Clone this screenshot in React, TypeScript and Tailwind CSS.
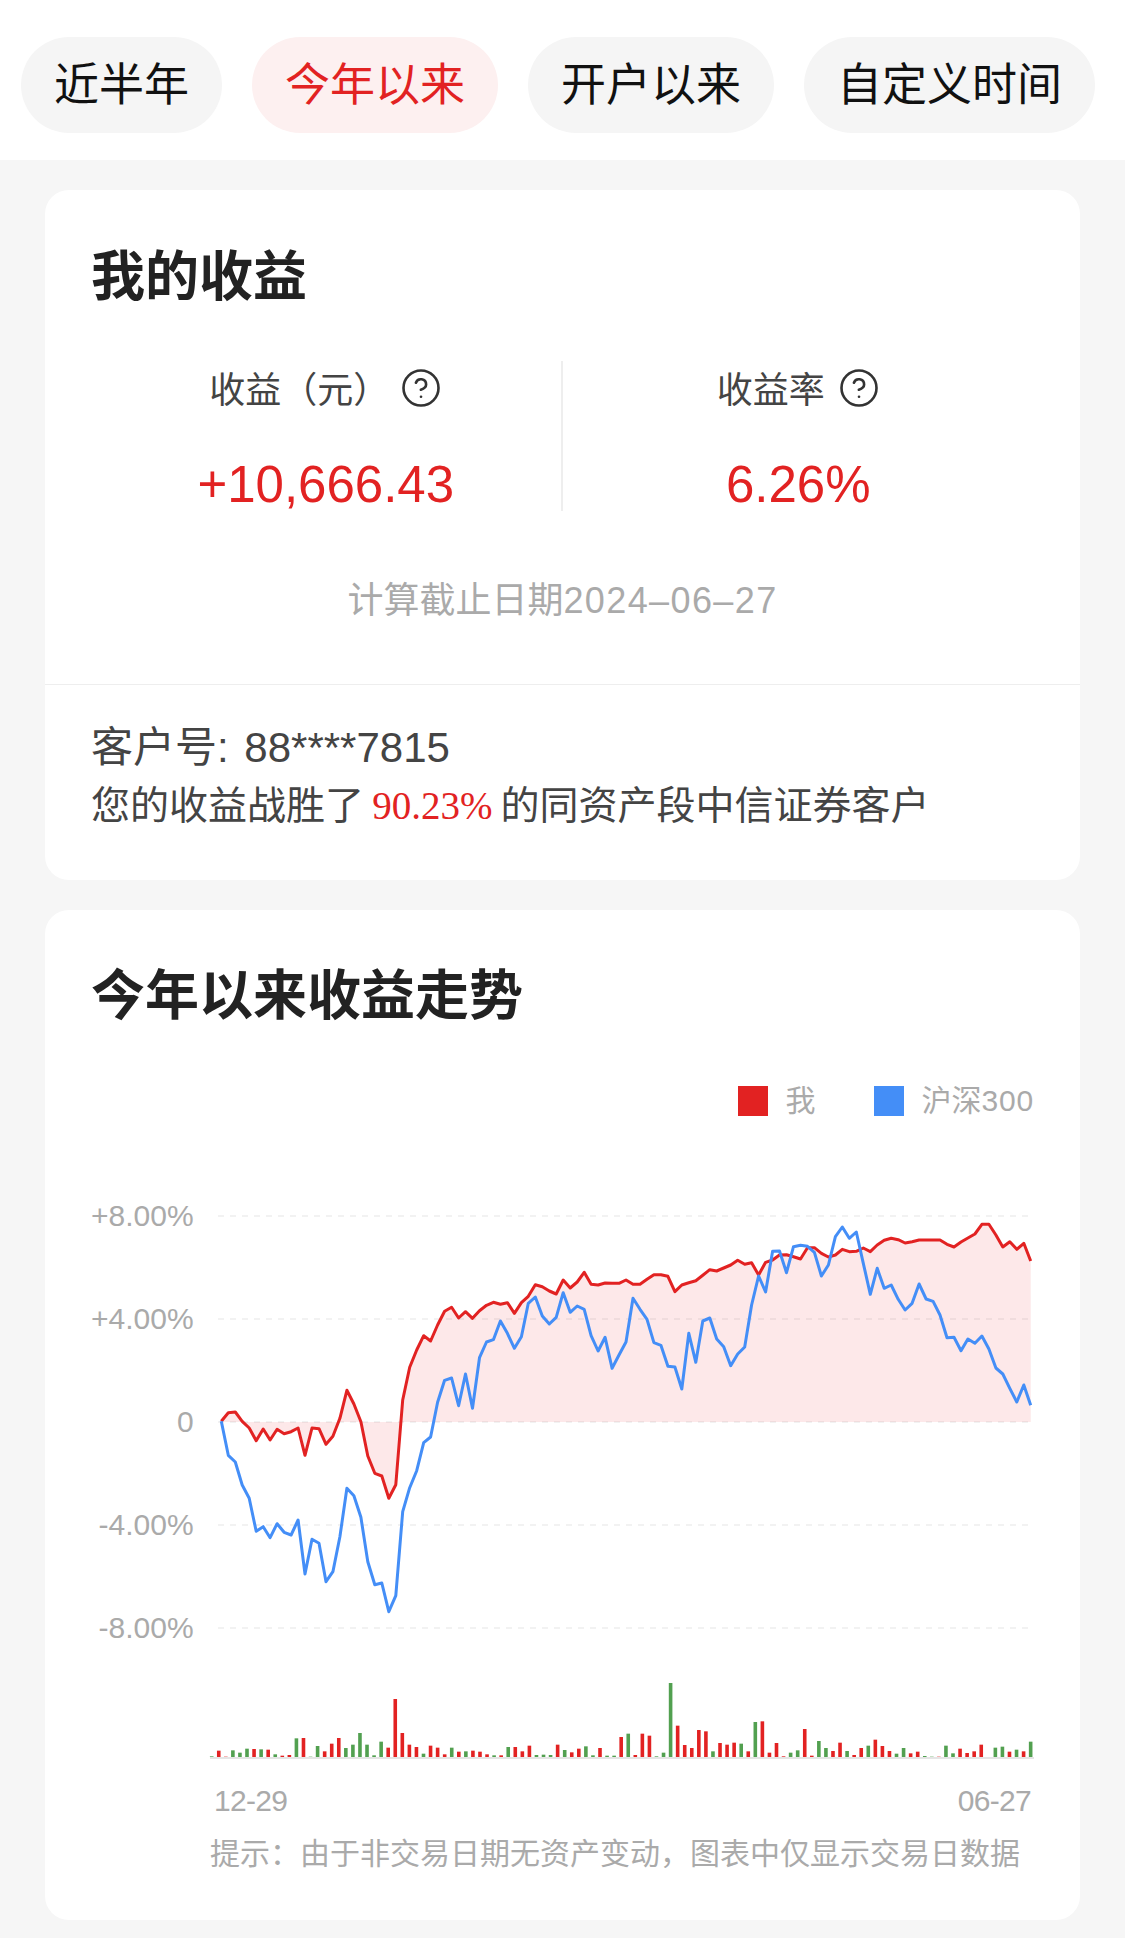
import { CircleHelp } from 'lucide-react'

// traced from the reference: y values are offsets*3 from the top of the chart
const red = [
  694, 668, 666, 694, 714, 752, 717, 750, 718, 731, 725, 714, 796, 714, 716, 763, 739, 685, 601, 642,
  695, 798, 850, 858, 925, 884, 630, 532, 480, 437, 453, 405, 364, 352, 384, 365, 385, 362, 346, 337,
  343, 338, 370, 338, 319, 284, 290, 303, 312, 270, 294, 276, 247, 283, 285, 279, 280, 280, 270,
  283, 283, 268, 254, 254, 259, 305, 285, 278, 272, 256, 239, 243, 234, 225, 211, 223, 218, 255, 217,
  210, 195, 194, 200, 207, 173, 173, 190, 201, 195, 178, 185, 184, 174, 185, 165, 151, 145, 149, 159,
  155, 150, 150, 150, 150, 163, 171, 156, 144, 132, 103, 103, 135, 171, 155, 178, 160, 213,
]

const blue = [
  694, 796, 816, 885, 925, 1024, 1010, 1043, 1001, 1027, 1035, 990, 1152, 1048, 1060, 1175, 1145, 1040, 895, 917,
  982, 1115, 1184, 1179, 1265, 1217, 965, 893, 842, 758, 741, 637, 571, 564, 647, 552, 655, 503, 456, 449,
  393, 430, 475, 440, 340, 321, 378, 402, 382, 308, 367, 348, 358, 437, 483, 442, 535, 495, 456,
  325, 358, 388, 458, 466, 529, 531, 597, 430, 517, 393, 384, 447, 470, 527, 492, 471, 345, 258, 306,
  184, 183, 248, 170, 166, 169, 187, 258, 225, 140, 111, 145, 126, 220, 313, 235, 295, 285, 328, 360,
  340, 282, 327, 334, 375, 443, 442, 482, 447, 460, 438, 477, 534, 552, 595, 636, 585, 646,
]

// [height*3, 1 = red / 0 = green]
const bars: [number, number][] = [
  [2, 0], [19, 1], [1, 1], [20, 0], [13, 0], [25, 0], [24, 1], [23, 0], [22, 1], [8, 0], [4, 1], [6, 1], [56, 0], [57, 1],
  [1, 0], [33, 0], [17, 1], [40, 1], [57, 1], [27, 0], [37, 0], [72, 0], [37, 0], [5, 0], [46, 0], [28, 1], [174, 1],
  [72, 1], [37, 1], [30, 1], [10, 0], [34, 1], [28, 1], [8, 1], [28, 0], [16, 1], [17, 0], [19, 1], [16, 1], [8, 1],
  [5, 0], [5, 1], [30, 0], [30, 1], [17, 1], [34, 1], [6, 0], [7, 0], [6, 0], [37, 1], [21, 0], [14, 1], [25, 1], [32, 0],
  [5, 0], [27, 1], [4, 0], [4, 0], [60, 1], [70, 0], [6, 1], [70, 1], [64, 1], [2, 0], [13, 0], [222, 0], [94, 1], [36, 1],
  [27, 1], [81, 1], [77, 1], [17, 0], [42, 1], [37, 1], [43, 1], [40, 0], [17, 1], [105, 0], [107, 1], [13, 1], [42, 1],
  [2, 1], [13, 0], [20, 0], [84, 1], [4, 1], [48, 0], [27, 0], [18, 1], [43, 1], [18, 0], [6, 1], [27, 1], [34, 0], [52, 1],
  [33, 1], [18, 1], [10, 0], [27, 0], [11, 1], [16, 1], [3, 0], [1, 0], [1, 1], [34, 0], [11, 0], [25, 1], [12, 1], [17, 1],
  [37, 1], [0, 1], [28, 0], [31, 0], [16, 1], [22, 0], [17, 1], [46, 0],
]

const px = (i: number) => 222.3 + i * 6.978
const py = (v: number) => 1190 + v / 3
const line = (data: number[]) => data.map((v, i) => `${px(i).toFixed(1)},${py(v).toFixed(1)}`).join(' ')

const Chart = () => (
  <svg width={830} height={580} viewBox="210 1190 830 580" className="block shrink-0">
    <polygon points={`222.3,1422 ${line(red)} ${px(116)},1422`} fill="#fde8e9" />
    {[1216, 1319, 1422, 1525, 1628].map((y) => (
      <line key={y} x1={219} x2={1030} y1={y} y2={y} stroke="#000000" strokeOpacity={0.05} strokeWidth={2} strokeDasharray="6 6" />
    ))}
    <polyline points={line(red)} fill="none" stroke="#e22222" strokeWidth={3} strokeLinejoin="round" />
    <polyline points={line(blue)} fill="none" stroke="#448ef7" strokeWidth={3} strokeLinejoin="round" />
    <rect x={211} y={1757} width={824} height={2} fill="#e5e5e5" />
    {bars.map(([h, up], i) => (
      <rect
        key={i}
        x={212.7 + i * 7.06 - 1.8}
        y={1757 - h / 3}
        width={3.6}
        height={h / 3}
        fill={up ? '#e22222' : '#52a050'}
      />
    ))}
  </svg>
)

const Tab = ({ label, active }: { label: string; active?: boolean }) => (
  <div
    className={`h-[96px] rounded-[48px] px-[33px] flex items-center text-[45px] leading-none ${
      active ? 'bg-[#fdf0f0] text-[#e22222]' : 'bg-[#f5f5f5] text-[#111111]'
    }`}
  >
    {label}
  </div>
)

const App = () => {
  return (
    <div className="min-h-[1938px] w-[1125px] bg-[#f6f6f6] pb-[18px] [font-family:'Liberation_Sans','Noto_Sans_CJK_SC',sans-serif]">
      <div className="h-[160px] bg-white pt-[37px] pl-[21px] flex items-start gap-[30px]">
        <Tab label="近半年" />
        <Tab label="今年以来" active />
        <Tab label="开户以来" />
        <Tab label="自定义时间" />
      </div>

      <div className="mx-[45px] mt-[30px] bg-white rounded-[24px]">
        <div className="px-[46px] pt-[60px]">
          <h3 className="text-[54px] leading-[54px] font-bold text-[#222222]">我的收益</h3>
          <div className="grid grid-cols-2 mt-[57px] h-[150px]">
            <div className="flex flex-col items-center pt-[8px] border-r-2 border-[#eeeeee]">
              <div className="flex items-center gap-[11px] h-[44px] text-[36px] text-[#444444]">
                收益（元）
                <CircleHelp size={42} strokeWidth={1.5} color="#333333" className="-mt-[6px]" />
              </div>
              <div className="mt-[47px] text-[51px] leading-[50px] text-[#e22222]">+10,666.43</div>
            </div>
            <div className="flex flex-col items-center pt-[8px]">
              <div className="flex items-center gap-[13px] h-[44px] text-[36px] text-[#444444]">
                收益率
                <CircleHelp size={42} strokeWidth={1.5} color="#333333" className="-mt-[6px]" />
              </div>
              <div className="mt-[47px] text-[51px] leading-[50px] text-[#e22222]">6.26%</div>
            </div>
          </div>
          <div className="mt-[68px] mb-[61px] text-center text-[36px] leading-[44px] text-[#aaaaaa]">
            计算截止日期<span className="tracking-[1.4px]">2024–06–27</span>
          </div>
        </div>
        <div className="border-t border-[#eeeeee] px-[46px] pt-[34px] pb-[45px] text-[#444444]">
          <div className="text-[42px] leading-[58px] [word-spacing:4px]">客户号: 88****7815</div>
          <div className="text-[39px] leading-[58px] [word-spacing:-2.7px]">
            您的收益战胜了 <span className="[font-family:'Liberation_Serif',serif] text-[#e22222]">90.23%</span> 的同资产段中信证券客户
          </div>
        </div>
      </div>

      <div className="mx-[45px] mt-[30px] bg-white rounded-[24px] px-[46px] pt-[59px] pb-[48px]">
        <h3 className="text-[54px] leading-[54px] font-bold text-[#222222]">今年以来收益走势</h3>
        <div className="mt-[60px] flex justify-end items-center text-[30px] leading-[36px] text-[#aaaaaa]">
          <span className="w-[30px] h-[30px] bg-[#e22222]" />
          <span className="ml-[18px]">我</span>
          <span className="ml-[58px] w-[30px] h-[30px] bg-[#448ef7]" />
          <span className="ml-[18px]">
            沪深<span className="tracking-[0.8px]">300</span>
          </span>
        </div>
        <div className="mt-[71px] flex">
          <div className="w-[104px] mr-[15px] mt-[8px] h-[448px] flex flex-col justify-between items-end text-[30px] leading-[36px] text-[#aaaaaa]">
            <span>+8.00%</span>
            <span>+4.00%</span>
            <span>0</span>
            <span>-4.00%</span>
            <span>-8.00%</span>
          </div>
          <Chart />
        </div>
        <div className="mt-[13px] ml-[123px] mr-[3px] flex justify-between text-[30px] leading-[36px] tracking-[-0.7px] text-[#aaaaaa]">
          <span>12-29</span>
          <span>06-27</span>
        </div>
        <div className="mt-[17px] ml-[119px] text-[30px] leading-[36px] text-[#aaaaaa] whitespace-nowrap">
          提示：由于非交易日期无资产变动，图表中仅显示交易日数据
        </div>
      </div>
    </div>
  )
}

export default App
